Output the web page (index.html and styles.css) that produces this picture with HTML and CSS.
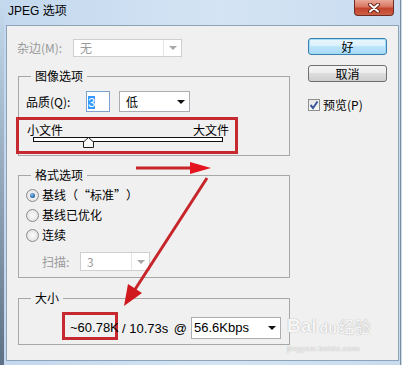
FILE: index.html
```html
<!DOCTYPE html>
<html lang="zh-CN">

<head>
    <meta charset="UTF-8" />
    <title>JPEG 选项</title>
    <link rel="stylesheet" href="styles.css">
</head>

<body>
    <div class="window">
        <div class="titlebar">
            <span class="title">JPEG 选项</span>
            <span class="close-btn">
                <svg width="14" height="10" viewBox="0 0 14 10">
                    <path d="M3 1.5 L11 8.5 M11 1.5 L3 8.5" stroke="#6b2418" stroke-width="4" stroke-linecap="round" />
                    <path d="M3 1.5 L11 8.5 M11 1.5 L3 8.5" stroke="#fff" stroke-width="2" stroke-linecap="round" />
                </svg>
            </span>
        </div>

        <div class="client">
            <div class="options">
                <div class="matte-row">
                    <span class="label disabled matte-label">杂边(M):</span>
                    <div class="select select-disabled matte-select">
                        <span class="value">无</span>
                        <span class="arrow-area"><i class="arrow"></i></span>
                    </div>
                </div>

                <fieldset class="group">
                    <legend>图像选项</legend>
                    <div class="quality-row">
                        <span class="label quality-label">品质(Q):</span>
                        <div class="quality-input"><span class="selected">3</span></div>
                        <div class="select quality-select">
                            <span class="value">低</span>
                            <span class="arrow-area"><i class="arrow"></i></span>
                        </div>
                    </div>
                    <div class="slider-box">
                        <div class="size-labels"><span>小文件</span><span>大文件</span></div>
                        <div class="slider">
                            <div class="track"></div>
                            <svg class="thumb" width="11" height="11" viewBox="0 0 11 11">
                                <polygon points="0.5,10.5 0.5,5 5.5,0.5 10.5,5 10.5,10.5" fill="#fafafa" stroke="#222" />
                            </svg>
                        </div>
                    </div>
                </fieldset>

                <fieldset class="group group-format">
                    <legend>格式选项</legend>
                    <div class="radio-row"><span class="radio checked"></span><span class="wide">基线（“标准”）</span></div>
                    <div class="radio-row"><span class="radio"></span>基线已优化</div>
                    <div class="radio-row"><span class="radio"></span>连续</div>
                    <div class="scan-row">
                        <span class="label disabled scan-label">扫描:</span>
                        <div class="select select-disabled scan-select">
                            <span class="value">3</span>
                            <span class="arrow-area"><i class="arrow"></i></span>
                        </div>
                    </div>
                </fieldset>

                <fieldset class="group group-size">
                    <legend>大小</legend>
                    <div class="size-row">
                        <span class="size-value">~60.78K</span>
                        <span class="rate-text"><span>/ 10.73s</span><span>@</span></span>
                        <div class="select rate-select">
                            <span class="value">56.6Kbps</span>
                            <span class="arrow-area"><i class="arrow"></i></span>
                        </div>
                    </div>
                </fieldset>
            </div>

            <div class="actions">
                <div class="btn btn-default">好</div>
                <div class="btn btn-cancel">取消</div>
                <div class="check-row">
                    <span class="checkbox">
                        <svg width="10" height="10" viewBox="0 0 10 10">
                            <path d="M1.5 5 L4 8 L8.5 1.5" fill="none" stroke="#3d5a98" stroke-width="2" />
                        </svg>
                    </span>
                    预览(P)
                </div>
            </div>
        </div>

        <div class="watermark">
            <div class="wm-logo"><span class="wm-bai">Bai</span><span class="wm-du">du</span><span class="wm-jy">经验</span></div>
            <div class="wm-url">jingyan.baidu.com</div>
        </div>

        <svg class="annotations" width="402" height="365" viewBox="0 0 402 365">
            <line x1="136" y1="168" x2="192" y2="168" stroke="#c8252b" stroke-width="3" />
            <polygon points="190,162 211,168 190,174" fill="#e3141d" />
            <line x1="207" y1="178" x2="134" y2="291" stroke="#c8252b" stroke-width="3" />
            <polygon points="124,306 128,284 142,293" fill="#d0191f" />
        </svg>
    </div>
</body>

</html>
```

FILE: styles.css
```css
body {
    margin: 0;
    background-color: #6b7d90;
    font-family: "Noto Sans CJK SC", sans-serif;
    font-size: 12px;
    color: #000;
}

.window {
    position: relative;
    width: 402px;
    height: 365px;
    display: flex;
    flex-direction: column;
    overflow: hidden;
    background:
        linear-gradient(to bottom, #c6daee 0, #9fb3c8 140px, #5f7184 365px) left top / 4px 100% no-repeat,
        linear-gradient(#7d8d9e, #7d8d9e) right 1px top / 1px 100% no-repeat,
        linear-gradient(to right, #c3d8ee, #d4e4f4 55%, #c8dbef);
}

.titlebar {
    height: 25px;
    flex-shrink: 0;
    display: flex;
}

.title {
    font-family: "Liberation Sans", "Noto Sans CJK SC", sans-serif;
    font-size: 12px;
    line-height: 14px;
    padding: 4px 0 0 8px;
}

.close-btn {
    margin-left: auto;
    margin-right: 8px;
    width: 40px;
    height: 16px;
    box-sizing: border-box;
    border: 1px solid #6e2b21;
    border-top: none;
    border-radius: 0 0 4px 4px;
    background: linear-gradient(#eaa898, #d97562 45%, #c2432b 55%, #cc6147);
    display: flex;
    align-items: center;
    justify-content: center;
}

.client {
    flex: 1;
    margin: 0 3px 4px 6px;
    border: 1px solid #8ea3b8;
    background-color: #f0f0f0;
    display: flex;
}

.options {
    width: 273px;
    padding: 13px 0 0 10px;
}

.label {
    line-height: 16px;
    white-space: nowrap;
}

.disabled {
    color: #9a9a9a;
}

.matte-row {
    display: flex;
    align-items: center;
    height: 18px;
}

.matte-label {
    width: 56px;
}

.select {
    display: flex;
    align-items: center;
    box-sizing: border-box;
    border: 1px solid #abadb3;
    background-color: #fff;
    padding-left: 6px;
    line-height: 16px;
}

.select .value {
    flex: 1;
}

.arrow-area {
    width: 17px;
    align-self: stretch;
    display: flex;
    align-items: center;
    justify-content: center;
}

.arrow {
    width: 0;
    height: 0;
    border-left: 4px solid transparent;
    border-right: 4px solid transparent;
    border-top: 4px solid #111;
}

.select-disabled {
    border-color: #cfcfcf;
    color: #9a9a9a;
}

.select-disabled .arrow-area {
    border-left: 1px solid #e4e4e4;
}

.select-disabled .arrow {
    border-top-color: #a8a8a8;
}

.matte-select {
    width: 109px;
    height: 18px;
}

.group {
    width: 272px;
    box-sizing: border-box;
    margin: 11px 0 0 1px;
    padding: 7px 0 1px 7px;
    border: 1px solid #a7a7a7;
    min-width: 0;
}

.group legend {
    margin-left: 5px;
    padding: 0 4px;
    line-height: 16px;
}

.quality-row {
    display: flex;
    align-items: center;
    height: 21px;
}

.quality-label {
    width: 60px;
}

.quality-input {
    width: 24px;
    height: 21px;
    box-sizing: border-box;
    border: 1px solid #7da2ce;
    background-color: #fff;
    padding: 1px 0 0 1px;
}

.selected {
    display: inline-block;
    background-color: #3399ff;
    color: #fff;
    font-family: "Liberation Sans", sans-serif;
    font-size: 13px;
    line-height: 13px;
    width: 7px;
}

.quality-select {
    margin-left: 9px;
    width: 71px;
    height: 21px;
}

.slider-box {
    width: 222px;
    height: 37px;
    box-sizing: border-box;
    margin: 5px 0 0 -10px;
    border: 3px solid #c62a30;
    padding: 2px 6px 0 8px;
}

.size-labels {
    display: flex;
    justify-content: space-between;
    line-height: 15px;
}

.slider {
    position: relative;
    height: 12px;
    margin: 0 6px;
}

.track {
    height: 5px;
    box-sizing: border-box;
    border: 1px solid #111;
    background-color: #fff;
}

.thumb {
    position: absolute;
    left: 50px;
    top: 0;
}

.group-format {
    padding: 2px 0 6px 7px;
}

.radio-row {
    display: flex;
    align-items: center;
    height: 20px;
    line-height: 16px;
}

.wide {
    font-feature-settings: "fwid";
    text-spacing-trim: space-all;
}

.radio {
    width: 13px;
    height: 13px;
    box-sizing: border-box;
    border: 1px solid #8b8b8b;
    border-radius: 50%;
    background: radial-gradient(circle at 50% 50%, #fdfdfd 0, #e4e4e4 70%, #d2d2d2 100%);
    margin-right: 3px;
    display: flex;
    align-items: center;
    justify-content: center;
}

.radio.checked::after {
    content: "";
    width: 5px;
    height: 5px;
    border-radius: 50%;
    background: radial-gradient(circle at 40% 35%, #8fc1ec 0, #2a6bb0 60%, #123f78 100%);
}

.scan-row {
    display: flex;
    align-items: center;
    height: 19px;
    margin-top: 7px;
    padding-left: 16px;
}

.scan-label {
    width: 38px;
}

.scan-select {
    width: 70px;
    height: 19px;
}

.group-size {
    margin-top: 12px;
    padding: 6px 0 4px 7px;
}

.size-row {
    display: flex;
    align-items: flex-end;
    height: 28px;
    font-family: "Liberation Sans", sans-serif;
    font-size: 13px;
}

.size-value {
    width: 56px;
    height: 28px;
    box-sizing: border-box;
    margin-left: 36px;
    border: 3px solid #c62a30;
    padding: 4px 0 0 5px;
    line-height: 18px;
    white-space: nowrap;
}

.rate-text {
    display: flex;
    justify-content: space-between;
    width: 65px;
    margin: 0 0 2px 4px;
    line-height: 18px;
    white-space: nowrap;
}

.rate-select {
    width: 90px;
    height: 22px;
    margin: 0 0 1px 4px;
    padding-left: 2px;
}

.actions {
    width: 79px;
    margin-left: 18px;
    padding-top: 12px;
}

.btn {
    height: 17px;
    box-sizing: border-box;
    border: 1px solid #707070;
    border-radius: 3px;
    background: linear-gradient(#f4f4f4 0, #ececec 50%, #dddddd 50%, #cfcfcf 100%);
    text-align: center;
    line-height: 15px;
}

.btn-default {
    border-color: #3c7fb1;
    background: linear-gradient(#eaf6fd 0, #d9f0fc 50%, #bee6fd 50%, #a7d9f5 100%);
    box-shadow: inset 0 0 0 1px #9fdcf5;
}

.btn-cancel {
    margin-top: 10px;
}

.check-row {
    display: flex;
    align-items: center;
    height: 12px;
    margin-top: 17px;
    line-height: 16px;
    white-space: nowrap;
}

.checkbox {
    width: 12px;
    height: 12px;
    box-sizing: border-box;
    border: 1px solid #8e8f8f;
    background: linear-gradient(#e6e6e6, #fafafa);
    margin-right: 3px;
    display: flex;
    align-items: center;
    justify-content: center;
}

.watermark {
    position: absolute;
    left: 287px;
    top: 312px;
    width: 86px;
    color: #f6f6f6;
    text-shadow: 0 0 1px #b9b9b9, 0 0 1px #b9b9b9;
}

.wm-logo {
    display: flex;
    align-items: flex-end;
    height: 24px;
}

.wm-bai {
    font-family: "Liberation Sans", sans-serif;
    font-weight: bold;
    font-size: 19px;
    line-height: 20px;
}

.wm-du {
    font-family: "Liberation Sans", sans-serif;
    font-weight: bold;
    font-size: 14px;
    line-height: 16px;
    margin: 0 2px 0 3px;
}

.wm-jy {
    font-size: 16px;
    line-height: 20px;
}

.wm-url {
    font-family: "Liberation Sans", sans-serif;
    font-size: 8px;
    line-height: 10px;
    margin-top: 8px;
    letter-spacing: 0.5px;
}

.annotations {
    position: absolute;
    left: 0;
    top: 0;
    pointer-events: none;
}
```
